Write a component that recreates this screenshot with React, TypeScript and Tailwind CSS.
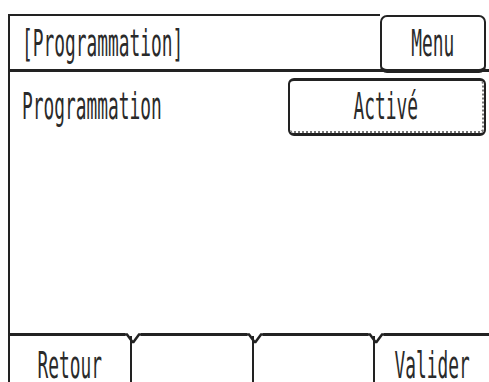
const mono = { fontFamily: '"DejaVu Sans Mono", "Liberation Mono", monospace' };

const Lcd = ({ text, center = false }: { text: string; center?: boolean }) => (
  <span
    style={mono}
    className={`inline-block whitespace-nowrap text-[38px] leading-[32px] text-[#2a2a2a] scale-x-[0.47] ${center ? 'origin-center' : 'origin-left'}`}
  >
    {text}
  </span>
);

const Notch = () => (
  <svg className="absolute -top-[3px] -left-[8px] w-[18px] h-[11px]" viewBox="0 0 18 11">
    <rect x="1" y="0" width="16" height="3" fill="#fff" />
    <polyline points="0,1.5 3,1.5 8.5,9 9.5,9 15,1.5 18,1.5" fill="none" stroke="#222" strokeWidth="2.5" />
  </svg>
);

const SoftKey = ({ label, notch = false }: { label?: string; notch?: boolean }) => (
  <div className={`relative min-w-0 flex justify-center pt-[13px] ${notch ? 'border-l-2 border-[#222]' : ''}`}>
    {notch && <Notch />}
    {label && <Lcd text={label} center />}
  </div>
);

export default function App() {
  return (
    <div className="w-[489px] h-[382px] bg-white overflow-hidden">
      <div className="ml-[8px] mt-[14px] h-[368px] border-l-2 border-[#222] flex flex-col">
        {/* header */}
        <div className="flex h-[58px] border-b-[3px] border-[#222]">
          <div className="flex-1 min-w-0 border-t-2 border-[#222] pl-[12px] flex items-center">
            <Lcd text="[Programmation]" />
          </div>
          <div className="relative z-10 shrink-0 mt-[1px] -mb-[4px] mr-[3px] w-[106px] bg-white border-2 border-b-[4px] border-[#222] rounded-[7px] flex items-center justify-center">
            <Lcd text="Menu" center />
          </div>
        </div>

        {/* body */}
        <div className="flex-1">
          <div className="mt-[6px] flex items-center justify-between">
            <div className="min-w-0 flex-1 pl-[12px]">
              <Lcd text="Programmation" />
            </div>
            <div className="shrink-0 mr-[3px] w-[198px] h-[58px] border-2 border-t-[3px] border-b-[3px] border-[#222] rounded-[6px]">
              <div className="h-full border-r-2 border-b-2 border-dotted border-[#777] rounded-[4px] flex items-center justify-center">
                <Lcd text="Activé" center />
              </div>
            </div>
          </div>
        </div>

        {/* soft keys */}
        <div className="h-[49px] border-t-[3px] border-[#222] grid grid-cols-[120px_122px_121px_minmax(0,1fr)]">
          <SoftKey label="Retour" />
          <SoftKey notch />
          <SoftKey notch />
          <SoftKey label="Valider" notch />
        </div>
      </div>
    </div>
  );
}
